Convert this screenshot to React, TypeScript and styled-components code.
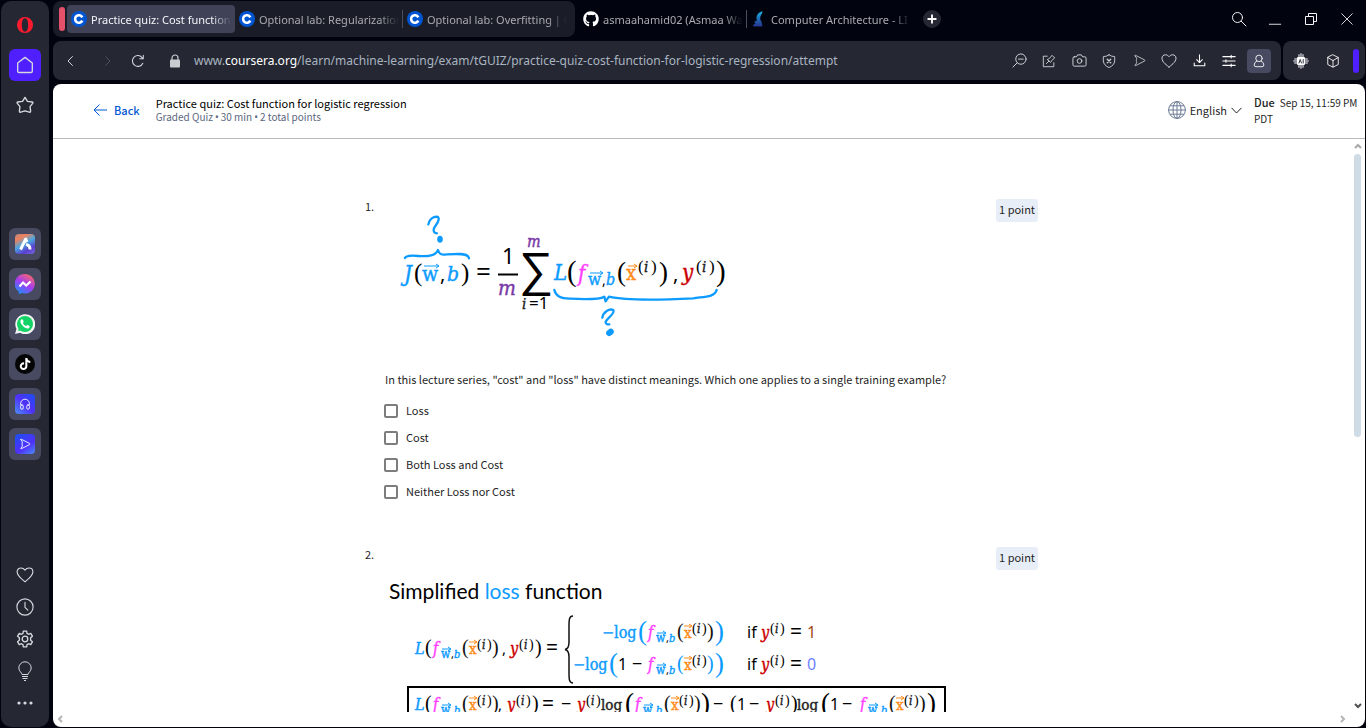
import React from "react";
import styled, { createGlobalStyle } from "styled-components";
import { FaGithub, FaTiktok } from "react-icons/fa";

const UI = `"Noto Sans", "Open Sans", sans-serif`;
const COURSE = `"Noto Sans CJK SC", "Noto Sans", sans-serif`;

const GlobalStyle = createGlobalStyle`
  * { box-sizing: border-box; }
  body { margin: 0; background: #01030f; font-family: ${UI}; }
  button { border: 0; padding: 0; margin: 0; background: none; font: inherit; color: inherit; }
  a { color: inherit; text-decoration: none; }
`;

/* ---------- browser frame ---------- */

const Browser = styled.div`
  display: flex;
  gap: 4px;
  height: 100vh;
  padding: 1px;
  overflow: hidden;
`;

const Sidebar = styled.nav`
  display: flex;
  flex-direction: column;
  align-items: center;
  flex: none;
  width: 48px;
  padding: 8px 0;
  border-radius: 10px;
  background: #252833;
`;

const SideGroup = styled.div<{ $gap: number; $top?: string }>`
  display: flex;
  flex-direction: column;
  align-items: center;
  gap: ${(p) => p.$gap}px;
  margin-top: ${(p) => p.$top ?? "0"};
`;

const SideButton = styled.button<{ $bg?: string }>`
  display: grid;
  place-items: center;
  width: 32px;
  height: 32px;
  border-radius: 6px;
  background: ${(p) => p.$bg ?? "transparent"};
  color: #d5d8de;
`;

const AppTile = styled.span<{ $bg: string; $round?: boolean }>`
  display: grid;
  place-items: center;
  width: 20px;
  height: 20px;
  border-radius: ${(p) => (p.$round ? "50%" : "4px")};
  background: ${(p) => p.$bg};
  color: #fff;
`;

const Main = styled.div`
  display: flex;
  flex-direction: column;
  flex: 1;
  min-width: 0;
`;

const TabStrip = styled.header`
  display: flex;
  align-items: center;
  height: 36px;
  margin-bottom: 4px;
  font-size: 11px;
`;

const Island = styled.div`
  display: flex;
  align-items: center;
  height: 36px;
  padding: 0 4px 0 6px;
  margin-right: 4px;
  border-radius: 8px;
  background: #1a1c27;
`;

const IslandMark = styled.span`
  width: 6px;
  height: 24px;
  margin-right: 2px;
  border-radius: 3px;
  background: #e5506a;
`;

const Tab = styled.button<{ $active?: boolean }>`
  display: flex;
  align-items: center;
  gap: 4px;
  width: 168px;
  height: 28px;
  padding: 0 4px;
  border-radius: 4px;
  background: ${(p) => (p.$active ? "#404358" : "transparent")};
  color: ${(p) => (p.$active ? "#f4f5f8" : "#a9abb0")};
  text-align: left;
  svg { flex: none; }
`;

const TabTitle = styled.span`
  flex: 1;
  overflow: hidden;
  white-space: nowrap;
  mask-image: linear-gradient(to right, #000 86%, transparent);
`;

const Divider = styled.i`
  width: 1px;
  height: 18px;
  margin-left: -1px;
  background: #4a4d5e;
`;

const NewTab = styled.button`
  display: grid;
  place-items: center;
  width: 18px;
  height: 18px;
  margin-left: 8px;
  border-radius: 50%;
  background: #252833;
  color: #fff;
`;

const WindowButtons = styled.div`
  display: flex;
  margin-left: auto;
  color: #f4f5f8;
`;

const WindowButton = styled.button`
  display: grid;
  place-items: center;
  width: 36px;
  height: 36px;
`;

const Toolbar = styled.div`
  display: flex;
  gap: 2px;
  height: 39px;
  margin-bottom: 4px;
`;

const Bar = styled.div<{ $grow?: boolean }>`
  display: flex;
  align-items: center;
  flex: ${(p) => (p.$grow ? 1 : "none")};
  min-width: 0;
  padding: 0 ${(p) => (p.$grow ? 7 : 6)}px 0 3px;
  border-radius: 8px;
  background: #252833;
  color: #d5d8de;
`;

const ToolButton = styled.button<{ $width?: number; $space?: number; $on?: boolean }>`
  display: grid;
  place-items: center;
  flex: none;
  width: ${(p) => p.$width ?? 30}px;
  height: 24px;
  margin-left: ${(p) => p.$space ?? 0}px;
  color: ${(p) => (p.$on ? "#fff" : "inherit")};
`;

const ProfileChip = styled.span`
  display: grid;
  place-items: center;
  width: 24px;
  height: 24px;
  border-radius: 4px;
  background: #474a61;
`;

const Address = styled.div`
  flex: 1;
  min-width: 0;
  overflow: hidden;
  white-space: nowrap;
  font-size: 12px;
  color: #a9b4c0;
  b { color: #fff; font-weight: 400; }
`;

const AccentBar = styled.span`
  width: 6px;
  height: 24px;
  margin-left: 3px;
  border-radius: 3px;
  background: #4f1fff;
`;

/* ---------- course page ---------- */

const Page = styled.div`
  display: flex;
  flex-direction: column;
  flex: 1;
  min-height: 0;
  overflow: hidden;
  border-radius: 8px;
  background: #fff;
  color: #1f1f1f;
  font-family: ${COURSE};
  font-size: 11px;
  line-height: 16px;
`;

const PageHeader = styled.header`
  display: flex;
  align-items: center;
  flex: none;
  height: 55px;
  padding: 0 11px 2px 40px;
  border-bottom: 1px solid #bbb;
`;

const BackLink = styled.a`
  display: flex;
  align-items: center;
  gap: 7px;
  margin-right: 16px;
  color: #0056d2;
  font-weight: 500;
`;

const Heading = styled.div`
  flex: 1;
  h1 { margin: 0; font-size: 11px; line-height: 14px; font-weight: 400; color: #000; }
  p { display: flex; gap: 2px; margin: 0; font-size: 10px; line-height: 14px; color: #5b6780; }
  i { font-family: "Noto Sans", sans-serif; font-style: normal; }
`;

const Language = styled.button`
  display: flex;
  align-items: center;
  gap: 4px;
  margin-right: 12px;
`;

const Due = styled.div`
  width: 100px;
  font-size: 10px;
  white-space: nowrap;
  b { margin-right: 5px; font-size: 11px; font-weight: 500; }
`;

const Viewport = styled.div`
  display: flex;
  flex: 1;
  min-height: 0;
`;

const Scroller = styled.main`
  flex: 1;
  min-width: 0;
  overflow: hidden;
`;

const Quiz = styled.ol`
  display: flex;
  flex-direction: column;
  gap: 44px;
  max-width: 673px;
  margin: 0 auto;
  padding: 59px 0 0;
  list-style: none;
`;

const Question = styled.li`
  display: grid;
  grid-template-columns: 20px 1fr auto;
  align-items: start;
`;

const Index = styled.span``;

const Points = styled.span`
  margin-top: 1px;
  padding: 2px 3px 5px;
  border-radius: 3px;
  background: #e8eef7;
`;

const Body = styled.fieldset`
  min-width: 0;
  height: 304px;
  margin: 0;
  padding: 0;
  border: 0;
`;

const Figure = styled.svg<{ $top: number }>`
  display: block;
  margin-top: ${(p) => p.$top}px;
  overflow: visible;
`;

const Prompt = styled.p`
  margin: 29px 0 10px;
`;

const Choice = styled.label`
  display: flex;
  align-items: center;
  gap: 8px;
  height: 27px;
  span { padding-bottom: 2px; }
`;

const Check = styled.input`
  appearance: none;
  width: 14px;
  height: 14px;
  margin: 0 0 0 -1px;
  border: 2px solid #7d7d7d;
  border-radius: 2px;
  background: #fff;
`;

const VBar = styled.div`
  display: flex;
  flex-direction: column;
  align-items: center;
  gap: 5px;
  width: 15px;
  padding: 4px 0 3px;
`;

const Thumb = styled.span`
  width: 7px;
  height: 283px;
  border-radius: 4px;
  background: #cfdce5;
`;

const HBar = styled.div`
  display: flex;
  justify-content: space-between;
  flex: none;
  height: 15px;
  padding: 3px 19px 0 4px;
`;

const Spacer = styled.span`
  flex: 1;
`;

/* ---------- icons ---------- */

type IconProps = { size?: number; w?: number; children: React.ReactNode };
const Icon = ({ size = 16, w = 1, children }: IconProps) => (
  <svg width={size} height={size} viewBox="0 0 16 16" fill="none" stroke="currentColor" strokeWidth={w} strokeLinecap="round" strokeLinejoin="round" aria-hidden="true">
    {children}
  </svg>
);

const heart = "M8 14C6.5 12.6 1 9.4 1 5.2C1 3 2.6 1.8 4.4 1.8C6 1.8 7.3 2.7 8 3.6C8.7 2.7 10 1.8 11.6 1.8C13.4 1.8 15 3 15 5.2C15 9.4 9.5 12.6 8 14Z";
const plane = "M2.6 2.6C1.9 1.9 2.4 1.4 3.4 1.8L14 7.2C15 7.7 15 8.3 14 8.8L3.4 14.2C2.4 14.600 1.9 14.1 2.6 13.4C4.8 11.5 4.8 10 4 8C4.8 6 4.800 4.500 2.6 2.6Z";

const CourseraIcon = () => (
  <svg width="16" height="16" viewBox="0 0 16 16" aria-hidden="true">
    <circle cx="8" cy="8" r="8" fill="#0056d2" />
    <path d="M11.3 9.7A3.800 3.800 0 1 1 11.3 6.3" fill="none" stroke="#fff" strokeWidth="2.6" />
  </svg>
);

const SailIcon = () => (
  <svg width="16" height="16" viewBox="0 0 16 16" aria-hidden="true">
    <defs>
      <linearGradient id="sail" x1="0" y1="0" x2="0" y2="1">
        <stop offset="0" stopColor="#1cb5e0" />
        <stop offset="0.6" stopColor="#1f5fae" />
        <stop offset="1" stopColor="#27348b" />
      </linearGradient>
    </defs>
    <path d="M11.500 .3C7 1.500 4.500 5 5.800 9.500C4.500 10 3 10.500 3.500 11.500L4.500 12.500L2 14L2.500 15.500H11.500L10.800 12C10.500 10 8.800 9 9.200 6.500C9.500 4.500 11.500 3 11.500 .3Z" fill="url(#sail)" />
  </svg>
);

const OperaIcon = () => (
  <svg width="18" height="18" viewBox="0 0 18 18" aria-hidden="true">
    <path fillRule="evenodd" fill="#ff1b2d" d="M9 1A8 8 0 1 0 9 17A8 8 0 1 0 9 1ZM9 2.300C11.200 2.300 12.200 5.500 12.200 9C12.200 12.500 11.200 15.700 9 15.700C6.800 15.700 5.800 12.500 5.800 9C5.800 5.500 6.800 2.300 9 2.300Z" />
  </svg>
);

const WhatsAppTile = () => (
  <svg width="20" height="20" viewBox="0 0 20 20" aria-hidden="true">
    <path d="M0 20L1.5 15A10 10 0 1 1 5 18.7Z" fill="#f3f3f3" />
    <circle cx="10" cy="10" r="8" fill="#13d366" />
    <path d="M3 17L4 13L7 16.2Z" fill="#13d366" />
    <path d="M6.3 5.500C7 5 7.8 5.2 8 6L8.6 7.5C8.7 8 8 8.5 7.9 9C8.5 10.5 9.8 11.6 11 12C11.6 11.9 12 11 12.500 11.1L14.500 12.1C15 12.500 14.500 14 13.500 14.400C10.500 15.500 5.500 10.500 5.400 7.600C5.400 6.700 5.700 5.900 6.300 5.500Z" fill="#fff" />
  </svg>
);

const MessengerTile = () => (
  <svg width="20" height="20" viewBox="0 0 20 20" aria-hidden="true">
    <defs>
      <linearGradient id="chat" x1="0.2" y1="1" x2="0.8" y2="0">
        <stop offset="0" stopColor="#1692ff" />
        <stop offset="0.5" stopColor="#a43bf5" />
        <stop offset="1" stopColor="#ff6b62" />
      </linearGradient>
    </defs>
    <path d="M10 0A10 9.7 0 1 1 7 19L4 20L3.500 17.300A10 9.700 0 0 1 10 0Z" fill="url(#chat)" />
    <path d="M4.500 12.500L8 8.500L11.200 11.500L15.500 7.500" stroke="#fff" strokeWidth="2.200" fill="none" />
  </svg>
);

const GearIcon = () => (
  <Icon size={18} w={1.2}>
    <circle cx="8" cy="8" r="2.5" />
    <path d="M6.5 1H9.5L9.8 3L11.2 3.8L13.100 3L14.600 5.500L13 6.900V9.100L14.600 10.500L13.100 13L11.200 12.200L9.800 13L9.500 15H6.500L6.200 13L4.800 12.200L2.900 13L1.400 10.500L3 9.100V6.900L1.400 5.500L2.900 3L4.800 3.800L6.200 3Z" />
  </Icon>
);

/* ---------- formulas ---------- */

const INK = "#111";
const BLUE = "#0d9bff";
const PINK = "#ff40ff";
const ORANGE = "#ff8c1a";
const RED = "#cc0000";
const PURPLE = "#7a3aa5";

/* symbols carry a hairline outline in their own colour, which gives them a medium weight */
const Symbol = styled.text`
  fill: currentColor;
  stroke: currentColor;
  stroke-width: 0.4px;
`;
const Italic = styled(Symbol)`
  font-family: "DejaVu Serif Condensed", "DejaVu Serif", serif;
  font-style: italic;
`;
const Upright = styled(Symbol)`
  font-family: "DejaVu Serif Condensed", "DejaVu Serif", serif;
`;
const Plain = styled.text`
  font-family: "Noto Sans", sans-serif;
`;
const Paren = styled.text`
  font-family: "Liberation Serif", serif;
`;
const FigureTitle = styled.text`
  font-family: Lato, sans-serif;
  font-size: 21px;
`;

type Mark = { x: number; y: number };

const Arrow = ({ x, y, len, color }: Mark & { len: number; color: string }) => (
  <path d={`M${x} ${y}h${len}m-3 -2l3 2l-3 2`} fill="none" stroke={color} strokeWidth="1" />
);

/* superscript (i) */
const Sup = ({ x, y, s = 12 }: Mark & { s?: number }) => (
  <>
    <Paren x={x} y={y} fontSize={s + 2}>(</Paren>
    <Italic x={x + (s > 12 ? 6 : 5)} y={y} fontSize={s}>i</Italic>
    <Paren x={x + (s > 12 ? 13 : 10)} y={y} fontSize={s + 2}>)</Paren>
  </>
);

/* f with subscript (w, b) applied to the i-th example */
const Model = ({ x, y, paren = INK }: Mark & { paren?: string }) => (
  <>
    <Italic x={x + 1} y={y} fontSize="16" color={PINK}>f</Italic>
    <Upright x={x + 9} y={y + 4} fontSize="12" color={BLUE}>w</Upright>
    <Arrow x={x + 10} y={y - 5} len={9} color={BLUE} />
    <Plain x={x + 19} y={y + 4} fontSize="11">,</Plain>
    <Italic x={x + 22} y={y + 4} fontSize="11" color={BLUE}>b</Italic>
    <Paren x={x + 30} y={y} fontSize="20" fill={paren}>(</Paren>
    <Upright x={x + 37} y={y} fontSize="15" color={ORANGE}>x</Upright>
    <Arrow x={x + 37} y={y - 12} len={8} color={ORANGE} />
    <Sup x={x + 45} y={y - 5} />
    <Paren x={x + 60} y={y} fontSize="20" fill={paren}>)</Paren>
  </>
);

const Label = ({ x, y }: Mark) => (
  <>
    <Italic x={x} y={y} fontSize="16" color={RED}>y</Italic>
    <Sup x={x + 9} y={y - 5} />
  </>
);

const CostFigure = () => (
  <Figure $top={12} width="360" height="132" role="img" aria-label="Cost function J of w and b">
    <g transform="translate(-25 -20) scale(.3333)" fill="none" stroke={BLUE} strokeWidth="7" strokeLinecap="round" strokeLinejoin="round">
      <path d="M205 103C208 86 222 78 234 81C244 92 222 108 221 118C220 126 224 130 231 130" />
      <ellipse cx="240" cy="148" rx="5" ry="7" fill={BLUE} />
      <path d="M135 204C140 196 155 196 175 198C200 200 228 198 234 180C237 190 240 194 250 194C280 192 325 186 327 205" />
      <path d="M583 300C588 318 600 326 630 326C670 328 720 328 733 320L737 334L747 320C790 330 900 330 1000 325C1030 320 1065 322 1070 300" />
      <path d="M727 383C730 365 748 355 760 360C767 370 738 388 737 396C737 402 742 404 748 403" />
      <ellipse cx="750" cy="427" rx="9" ry="6" fill={BLUE} transform="rotate(-40 750 427)" />
    </g>
    <Italic x="19" y="71" fontSize="22" color={BLUE}>J</Italic>
    <Paren x="29" y="71" fontSize="25">(</Paren>
    <Upright x="37" y="71" fontSize="21" color={BLUE}>w</Upright>
    <Arrow x={39} y={56} len={15} color={BLUE} />
    <Plain x="55" y="71" fontSize="20">,</Plain>
    <Italic x="62" y="71" fontSize="21" color={BLUE}>b</Italic>
    <Paren x="76" y="71" fontSize="25">)</Paren>
    <Plain x="91" y="71" fontSize="26">=</Plain>
    <Plain x="117" y="54" fontSize="22">1</Plain>
    <path d="M113 64.5H133" stroke="#000" strokeWidth="2" />
    <Italic x="113" y="85" fontSize="21" color={PURPLE}>m</Italic>
    <Italic x="142" y="37" fontSize="16" color={PURPLE}>m</Italic>
    <Plain x="134" y="76" fontSize="48">∑</Plain>
    <Italic x="137" y="99" fontSize="15">i</Italic>
    <Plain x="144" y="99" fontSize="17">=1</Plain>
    <Italic x="169" y="70" fontSize="22" color={BLUE}>L</Italic>
    <Paren x="182" y="71" fontSize="29">(</Paren>
    <Italic x="193" y="71" fontSize="22" color={PINK}>f</Italic>
    <Upright x="203" y="75" fontSize="17" color={BLUE}>w</Upright>
    <Arrow x={205} y={63} len={13} color={BLUE} />
    <Plain x="217" y="75" fontSize="14">,</Plain>
    <Italic x="221" y="75" fontSize="16" color={BLUE}>b</Italic>
    <Paren x="232" y="71" fontSize="27">(</Paren>
    <Upright x="241" y="70" fontSize="20" color={ORANGE}>x</Upright>
    <Arrow x={243} y={56} len={9} color={ORANGE} />
    <Sup x={253} y={62} s={15} />
    <Paren x="274" y="71" fontSize="27">)</Paren>
    <Plain x="288" y="71" fontSize="20">,</Plain>
    <Italic x="297" y="70" fontSize="22" color={RED}>y</Italic>
    <Sup x={311} y={62} s={15} />
    <Paren x="331" y="71" fontSize="29">)</Paren>
  </Figure>
);

const LossFigure = () => (
  <Figure $top={29} width="570" height="160" role="img" aria-label="Simplified loss function">
    <FigureTitle x="4" y="24">Simplified <tspan fill={BLUE}>loss</tspan> function</FigureTitle>

    <Italic x="30" y="79" fontSize="16" color={BLUE}>L</Italic>
    <Paren x="40" y="79" fontSize="20">(</Paren>
    <Model x={47} y={79} />
    <Plain x="117" y="79" fontSize="15">,</Plain>
    <Label x={125} y={79} />
    <Paren x="150" y="79" fontSize="20">)</Paren>
    <Plain x="161" y="80" fontSize="21">=</Plain>
    <path d="M188 41C184 41 184 45 184 52V67C184 71 183 74 180 74.5C183 75 184 78 184 82V97C184 104 184 108 188 108" fill="none" stroke={INK} strokeWidth="1.5" />

    <Upright x="217" y="63" fontSize="16" color={BLUE}>−log</Upright>
    <Paren x="253" y="65" fontSize="27" fill={BLUE}>(</Paren>
    <Model x={262} y={63} />
    <Paren x="330" y="65" fontSize="27" fill={BLUE}>)</Paren>
    <Plain x="362" y="63" fontSize="16">if</Plain>
    <Label x={376} y={63} />
    <Plain x="405" y="64" fontSize="21">=</Plain>
    <Plain x="422" y="63" fontSize="16" fill="#a04a10">1</Plain>

    <Upright x="188" y="95" fontSize="16" color={BLUE}>−log</Upright>
    <Paren x="224" y="97" fontSize="27" fill={BLUE}>(</Paren>
    <Plain x="233" y="95" fontSize="16">1</Plain>
    <Plain x="247" y="95" fontSize="18">−</Plain>
    <Model x={262} y={95} paren={BLUE} />
    <Paren x="330" y="97" fontSize="27" fill={BLUE}>)</Paren>
    <Plain x="362" y="95" fontSize="16">if</Plain>
    <Label x={376} y={95} />
    <Plain x="405" y="96" fontSize="21">=</Plain>
    <Plain x="422" y="95" fontSize="16" fill="#7080ff">0</Plain>

    <rect x="23" y="112" width="537" height="46" fill="none" stroke="#000" strokeWidth="2" />
    <Italic x="30" y="135" fontSize="16" color={BLUE}>L</Italic>
    <Paren x="40" y="135" fontSize="20">(</Paren>
    <Model x={47} y={135} />
    <Plain x="113" y="135" fontSize="15">,</Plain>
    <Label x={122} y={135} />
    <Paren x="147" y="135" fontSize="20">)</Paren>
    <Plain x="157" y="136" fontSize="21">=</Plain>
    <Plain x="176" y="135" fontSize="18">−</Plain>
    <Label x={192} y={135} />
    <Upright x="216" y="135" fontSize="15">log</Upright>
    <Paren x="240" y="137" fontSize="27">(</Paren>
    <Model x={249} y={135} />
    <Paren x="316" y="137" fontSize="27">)</Paren>
    <Plain x="328" y="135" fontSize="18">−</Plain>
    <Paren x="345" y="135" fontSize="20">(</Paren>
    <Plain x="352" y="135" fontSize="16">1</Plain>
    <Plain x="364" y="135" fontSize="18">−</Plain>
    <Label x={381} y={135} />
    <Paren x="406" y="135" fontSize="20">)</Paren>
    <Upright x="412" y="135" fontSize="15">log</Upright>
    <Paren x="436" y="137" fontSize="27">(</Paren>
    <Plain x="445" y="135" fontSize="16">1</Plain>
    <Plain x="457" y="135" fontSize="18">−</Plain>
    <Model x={474} y={135} />
    <Paren x="542" y="137" fontSize="27">)</Paren>
  </Figure>
);

const choices = ["Loss", "Cost", "Both Loss and Cost", "Neither Loss nor Cost"];

export default function App() {
  return (
    <>
      <GlobalStyle />
      <Browser>
        <Sidebar aria-label="Sidebar">
          <SideGroup $gap={8}>
            <SideButton aria-label="Opera menu"><OperaIcon /></SideButton>
            <SideButton $bg="#4f1fff" aria-label="Home">
              <Icon size={18} w={1.2}><path d="M8 1.2L14.500 6.200V13.500Q14.500 14.700 13.300 14.700H2.700Q1.500 14.700 1.500 13.500V6.200Z" /></Icon>
            </SideButton>
            <SideButton aria-label="Pinboards">
              <Icon size={18} w={1.2}><path d="M8 1.2L10.200 4.800L14.500 5.300Q15.400 5.800 14.800 6.600L12.500 9.400L13 13.500Q12.800 14.700 11.800 14.400L8 13.300L4.200 14.400Q3.200 14.700 3 13.500L3.500 9.400L1.200 6.600Q.6 5.800 1.500 5.300L5.800 4.800Z" /></Icon>
            </SideButton>
          </SideGroup>
          <SideGroup $gap={8} $top="107px">
            <SideButton $bg="#474a61" aria-label="Aria">
              <AppTile $bg="linear-gradient(150deg, #b08a8a 0%, #f0805a 22%, #4aa8e0 48%, #5a3fd0 75%, #7a6ae0 100%)">
                <svg width="16" height="16" viewBox="0 0 16 16" fill="none" stroke="#fff" strokeWidth="3"><path d="M3.500 13.500L8.500 3.500M8 2L10 6M9 8.500Q13 9 13 13.500" /></svg>
              </AppTile>
            </SideButton>
            <SideButton $bg="#474a61" aria-label="Messenger"><MessengerTile /></SideButton>
            <SideButton $bg="#474a61" aria-label="WhatsApp"><WhatsAppTile /></SideButton>
            <SideButton $bg="#474a61" aria-label="TikTok"><AppTile $bg="#050505" $round><FaTiktok size={12} /></AppTile></SideButton>
            <SideButton $bg="#474a61" aria-label="Player">
              <AppTile $bg="linear-gradient(225deg, #1a50f0, #5030f8 50%, #4a90f8)">
                <Icon size={14}><path d="M3 9V7.500A5 5 0 0 1 13 7.500V9M4.500 9A1.500 1.500 0 0 1 6 10.500V12.500A1.500 1.500 0 0 1 3 12.500V10.500A1.500 1.500 0 0 1 4.500 9ZM11.500 9A1.500 1.500 0 0 1 13 10.500V12.500A1.500 1.500 0 0 1 10 12.500V10.500A1.500 1.500 0 0 1 11.500 9Z" /></Icon>
              </AppTile>
            </SideButton>
            <SideButton $bg="#474a61" aria-label="My Flow">
              <AppTile $bg="linear-gradient(145deg, #1a50f0, #5030f8 60%, #4a90f8)"><Icon size={12} w={1.2}><path d={plane} /></Icon></AppTile>
            </SideButton>
          </SideGroup>
          <SideGroup $gap={0} $top="auto">
            <SideButton aria-label="Bookmarks"><Icon size={18}><path d={heart} /></Icon></SideButton>
            <SideButton aria-label="History"><Icon size={18}><circle cx="8" cy="8" r="7.200" /><path d="M8 3.800V8.300L10.500 10.800" /></Icon></SideButton>
            <SideButton aria-label="Settings"><GearIcon /></SideButton>
            <SideButton aria-label="Tips">
              <svg width="18" height="20" viewBox="0 0 18 20" fill="none" stroke="currentColor"><path d="M6 13.500C6 11.500 2.800 10.500 2.800 7A6.200 6.200 0 0 1 15.200 7C15.200 10.500 12 11.500 12 13.500ZM6 15.500H12M6.500 17.500H11.500M8 19.500H10" /></svg>
            </SideButton>
            <SideButton aria-label="More">
              <svg width="18" height="4" viewBox="0 0 18 4" fill="currentColor"><circle cx="3" cy="2" r="1.600" /><circle cx="9" cy="2" r="1.600" /><circle cx="15" cy="2" r="1.600" /></svg>
            </SideButton>
          </SideGroup>
        </Sidebar>

        <Main>
          <TabStrip>
            <Island>
              <IslandMark />
              <Tab $active><CourseraIcon /><TabTitle>Practice quiz: Cost function</TabTitle></Tab>
              <Tab><CourseraIcon /><TabTitle>Optional lab: Regularization</TabTitle></Tab>
              <Divider />
              <Tab><CourseraIcon /><TabTitle>Optional lab: Overfitting | C</TabTitle></Tab>
            </Island>
            <Tab><FaGithub size={16} color="#fff" /><TabTitle>asmaahamid02 (Asmaa Wa</TabTitle></Tab>
            <Divider />
            <Tab><SailIcon /><TabTitle>Computer Architecture - LI</TabTitle></Tab>
            <NewTab aria-label="New tab"><Icon size={12} w={2.500}><path d="M8 3V13M3 8H13" /></Icon></NewTab>
            <WindowButtons>
              <WindowButton aria-label="Search tabs"><Icon><circle cx="6.500" cy="6.500" r="5" /><path d="M10.200 10.200L15 15" /></Icon></WindowButton>
              <WindowButton aria-label="Minimize"><Icon size={14}><path d="M1.500 14H14.500" /></Icon></WindowButton>
              <WindowButton aria-label="Restore"><svg width="14" height="14" viewBox="0 0 14 14" fill="none" stroke="currentColor"><path d="M1.500 4.500H9.500V12.500H1.500ZM4.500 4.500V1.500H12.500V9.500H9.500" /></svg></WindowButton>
              <WindowButton aria-label="Close"><Icon size={14}><path d="M2 2L14 14M14 2L2 14" /></Icon></WindowButton>
            </WindowButtons>
          </TabStrip>

          <Toolbar>
            <Bar $grow>
              <ToolButton aria-label="Back"><Icon size={12} w={1.300}><path d="M10 2L4 8L10 14" /></Icon></ToolButton>
              <ToolButton $width={42} aria-label="Forward"><svg width="12" height="12" viewBox="0 0 16 16" fill="none" stroke="#5d606b"><path d="M6 2L12 8L6 14" /></svg></ToolButton>
              <ToolButton $width={20} aria-label="Reload"><Icon size={14} w={1.200}><path d="M13.500 10.500A6.200 6.200 0 1 1 13 4.500M14 1.500V5.500H10" /></Icon></ToolButton>
              <ToolButton $width={38} $space={8} aria-label="Site information">
                <svg width="10" height="14" viewBox="0 0 10 14"><rect y="5.500" width="10" height="8" rx="1" fill="#c9ccd0" /><path d="M2 6V4A3 3 0 0 1 8 4V6" fill="none" stroke="#c9ccd0" strokeWidth="1.200" /></svg>
              </ToolButton>
              <Address>www.<b>coursera.org</b>/learn/machine-learning/exam/tGUIZ/practice-quiz-cost-function-for-logistic-regression/attempt</Address>
              <ToolButton aria-label="Zoom"><Icon size={15}><circle cx="9.500" cy="6.500" r="5.500" /><path d="M5.500 10.500L1 15M7 6.500H12" /></Icon></ToolButton>
              <ToolButton aria-label="Edit page"><Icon size={14}><path d="M6 2.500H1.500V14.500H13.500V10M5 11L8 8M6.500 6.500L9.500 9.500C10.500 9.500 11 8 11 7.500L14.500 4.500L11.500 1.500L8.500 5C8 5 6.500 5.500 6.500 6.500Z" /></Icon></ToolButton>
              <ToolButton aria-label="Snapshot"><Icon size={15}><path d="M2.500 4H4.800L6 2H10L11.200 4H13.500Q15 4 15 5.500V12.500Q15 14 13.500 14H2.500Q1 14 1 12.500V5.500Q1 4 2.500 4Z" /><circle cx="8" cy="8.500" r="2.500" /></Icon></ToolButton>
              <ToolButton aria-label="Ad blocker"><Icon size={14}><path d="M8 1Q11 3 14.500 3V8Q14 13 8 15.500Q2 13 1.500 8V3Q5 3 8 1Z" /><path d="M6 6L10 10M10 6L6 10" strokeWidth="1.400" /></Icon></ToolButton>
              <ToolButton aria-label="Send to My Flow"><Icon size={13}><path d={plane} /></Icon></ToolButton>
              <ToolButton aria-label="Bookmark"><Icon size={16}><path d={heart} /></Icon></ToolButton>
              <ToolButton $on aria-label="Downloads"><Icon size={13} w={1.300}><path d="M8 1V10M4.500 7L8 10.500L11.500 7M1.500 11V14.500H14.500V11" /></Icon></ToolButton>
              <ToolButton $on aria-label="Easy setup"><Icon size={14} w={1.200}><path d="M1 3H15M1 8H15M1 13H15M10.500 1.500V4.500M4.500 6.500V9.500M10.500 11.500V14.500" /></Icon></ToolButton>
              <ToolButton $on aria-label="Profile"><ProfileChip><Icon size={14}><circle cx="8" cy="5" r="3.700" /><path d="M5.500 8Q2.500 9.500 2.500 12.500Q2.500 14.500 4.500 14.500H11.500Q13.500 14.500 13.500 12.500Q13.500 9.500 10.500 8" /></Icon></ProfileChip></ToolButton>
            </Bar>
            <Bar>
              <ToolButton $on aria-label="AI extension">
                <Icon size={16}><path d="M6 2V14M8 1V15M10 2V14M2 6H14M1 8H15M2 10H14" stroke="#8f929b" strokeWidth="2" /><rect x="4" y="4" width="8" height="8" rx="1" fill="#fff" stroke="none" /><path d="M6 10L7.200 6.500L8.500 10M10.200 6.500V10" stroke="#30333d" /></Icon>
              </ToolButton>
              <ToolButton $width={34} $on aria-label="Extensions"><Icon size={14}><path d="M8 1L14 4V12L8 15L2 12V4ZM2 4L8 7.500L14 4M8 7.500V15" /></Icon></ToolButton>
              <AccentBar />
            </Bar>
          </Toolbar>

          <Page>
            <PageHeader>
              <BackLink href="#back">
                <svg width="14" height="12" viewBox="0 0 14 12" fill="none" stroke="currentColor" aria-hidden="true"><path d="M14 6H1M6.500 .5L1 6L6.500 11.500" /></svg>
                Back
              </BackLink>
              <Heading>
                <h1>Practice quiz: Cost function for logistic regression</h1>
                <p>Graded Quiz<i>•</i>30 min<i>•</i>2 total points</p>
              </Heading>
              <Language>
                <svg width="18" height="18" viewBox="0 0 18 18" fill="none" stroke="#6a7a94" aria-hidden="true"><circle cx="9" cy="9" r="8.400" /><ellipse cx="9" cy="9" rx="4" ry="8.400" /><path d="M.6 9H17.400M9 .6V17.400M2 4.800H16M2 13.200H16" /></svg>
                English
                <svg width="11" height="7" viewBox="0 0 11 7" fill="none" stroke="#1f1f1f" aria-hidden="true"><path d="M.5 .8L5.500 6L10.500 .8" /></svg>
              </Language>
              <Due><b>Due</b>Sep 15, 11:59 PM<br />PDT</Due>
            </PageHeader>

            <Viewport>
              <Scroller>
                <Quiz>
                  <Question>
                    <Index>1.</Index>
                    <Body>
                      <CostFigure />
                      <Prompt>In this lecture series, "cost" and "loss" have distinct meanings. Which one applies to a single training example?</Prompt>
                      {choices.map((c) => (
                        <Choice key={c}><Check type="checkbox" /><span>{c}</span></Choice>
                      ))}
                    </Body>
                    <Points>1 point</Points>
                  </Question>
                  <Question>
                    <Index>2.</Index>
                    <Body><LossFigure /></Body>
                    <Points>1 point</Points>
                  </Question>
                </Quiz>
              </Scroller>
              <VBar>
                <svg width="8" height="6" viewBox="0 0 8 6" fill="none" stroke="#a9a9a9" strokeWidth="2"><path d="M1 5L4 2L7 5" /></svg>
                <Thumb />
                <Spacer />
                <svg width="8" height="6" viewBox="0 0 8 6" fill="none" stroke="#505050" strokeWidth="2"><path d="M1 1L4 4L7 1" /></svg>
              </VBar>
            </Viewport>
            <HBar>
              <svg width="6" height="8" viewBox="0 0 6 8" fill="none" stroke="#b5b5b5" strokeWidth="2"><path d="M5 1L2 4L5 7" /></svg>
              <svg width="6" height="8" viewBox="0 0 6 8" fill="none" stroke="#b5b5b5" strokeWidth="2"><path d="M1 1L4 4L1 7" /></svg>
            </HBar>
          </Page>
        </Main>
      </Browser>
    </>
  );
}
